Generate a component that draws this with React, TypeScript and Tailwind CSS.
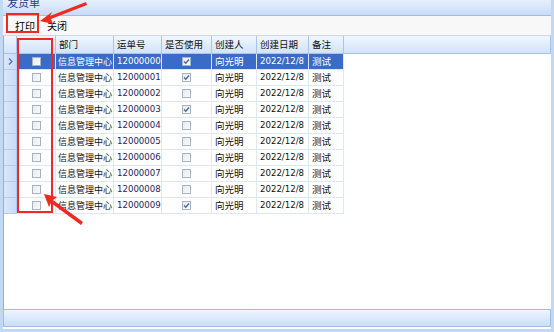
import React from "react";

const font = { fontFamily: '"Noto Sans CJK SC", "Noto Sans", sans-serif' };

const cols = [
  { key: "chk", title: "", w: 39 },
  { key: "dept", title: "部门", w: 58 },
  { key: "no", title: "运单号", w: 48 },
  { key: "use", title: "是否使用", w: 50 },
  { key: "man", title: "创建人", w: 45 },
  { key: "date", title: "创建日期", w: 52 },
  { key: "memo", title: "备注", w: 35 },
];

const used = [true, true, false, true, false, false, false, false, false, true];

function Check({ checked }: { checked: boolean }) {
  return (
    <div className="w-[9px] h-[9px] border border-[#a9b3bf] bg-gradient-to-br from-[#e6e9ee] to-[#fbfbfc] flex items-center justify-center">
      {checked && (
        <svg width="7" height="7" viewBox="0 0 7 7">
          <path d="M1 3.5 L2.8 5.3 L6 1.5" stroke="#4b6a9b" strokeWidth="1.4" fill="none" />
        </svg>
      )}
    </div>
  );
}

export default function App() {
  const rows = used.map((u, i) => ({
    dept: "信息管理中心",
    no: "1200000" + i,
    use: u,
    man: "向光明",
    date: "2022/12/8",
    memo: "测试",
  }));
  return (
    <div className="relative w-[554px] h-[332px] bg-white overflow-hidden text-[9px]" style={font}>
      <div className="absolute inset-0 border-l-[3px] border-r-[3px] border-b-[3px] border-[#c3d8f3] pointer-events-none" />
      <div className="flex flex-col h-full pl-[3px] pr-[3px] pb-[5px]">
        {/* title */}
        <div className="h-[16px] border-b border-[#9fbde6] bg-gradient-to-b from-[#e6f0fd] to-[#c8dcf7] overflow-hidden">
          <div className="pl-[4px] -mt-[5px] text-[11px] text-[#1c3e7a] leading-[14px]">发货单</div>
        </div>
        {/* toolbar */}
        <div className="h-[20px] bg-[#f8f8f8] border-b border-[#d0d7e2] flex items-center gap-[12px] pl-[12px] text-black text-[10px]">
          <span>打印</span>
          <span>关闭</span>
        </div>
        {/* grid */}
        <div className="flex-1 flex flex-col border-l border-[#8fb0de] bg-white">
          <div className="flex h-[18px] border-b border-[#a9c4ea] bg-gradient-to-b from-[#f0f6fe] to-[#d2e3f9] border-r border-[#9ab8e4]">
            <div className="w-[13px] border-r border-[#a9c4ea]" />
            {cols.map((c) => (
              <div
                key={c.key}
                style={{ width: c.w }}
                className="border-r border-[#a9c4ea] flex items-center pl-[3px] text-[#101010] text-[9.5px] whitespace-nowrap overflow-hidden"
              >
                {c.title}
              </div>
            ))}
          </div>
          {rows.map((r, i) => {
            const sel = i === 0;
            const txt = sel ? "text-white" : "text-[#111]";
            const cell = "border-r border-b border-[#dde7f5] flex items-center whitespace-nowrap overflow-hidden";
            return (
              <div key={i} className="flex h-[16px]">
                <div className="w-[13px] border-r border-b border-[#b4cbec] bg-gradient-to-r from-[#dae7f9] to-[#c9dbf5] flex items-center justify-center">
                  {sel && (
                    <svg width="5" height="7" viewBox="0 0 5 7">
                      <path d="M1 0.5 L4 3.5 L1 6.5" stroke="#3d6fb8" strokeWidth="1.1" fill="none" />
                    </svg>
                  )}
                </div>
                <div className={`flex ${sel ? "bg-[#3a6bc6]" : "bg-white"}`}>
                  <div style={{ width: 39 }} className={`${cell} justify-center`}>
                    <Check checked={false} />
                  </div>
                  <div style={{ width: 58 }} className={`${cell} pl-[2px] ${txt} text-[9px]`}>{r.dept}</div>
                  <div
                    style={{ width: 48, fontFamily: '"DejaVu Sans", sans-serif' }}
                    className={`${cell} pl-[3px] ${sel ? "text-white" : "text-[#2a1a5e]"} text-[8.6px]`}
                  >
                    {r.no}
                  </div>
                  <div style={{ width: 50 }} className={`${cell} justify-center`}>
                    <Check checked={r.use} />
                  </div>
                  <div style={{ width: 45 }} className={`${cell} pl-[3px] ${txt} text-[9.5px]`}>{r.man}</div>
                  <div
                    style={{ width: 52, fontFamily: '"DejaVu Sans", sans-serif' }}
                    className={`${cell} pl-[3px] ${txt} text-[8.6px]`}
                  >
                    {r.date}
                  </div>
                  <div style={{ width: 35 }} className={`${cell} pl-[3px] ${txt} text-[9.5px]`}>{r.memo}</div>
                </div>
              </div>
            );
          })}
        </div>
        {/* bottom bar */}
        <div className="h-[18px] border border-[#9fbde6] bg-gradient-to-b from-[#eef5ff] to-[#c9ddf8]" />
      </div>

      {/* annotations */}
      <svg className="absolute inset-0 pointer-events-none" width="554" height="332" viewBox="0 0 554 332">
        <rect x="7" y="14" width="31" height="18" fill="none" stroke="#f02a1e" strokeWidth="2" />
        <rect x="18" y="39" width="34" height="173" fill="none" stroke="#f02a1e" strokeWidth="2" />
        <polygon points="40,21 52,12 50,16 86,2 87,5 51,19 53,24" fill="#f02a1e" />
        <polygon points="44,194 57,197 53,200 83,222 81,225 51,203 49,207" fill="#f02a1e" />
      </svg>
    </div>
  );
}
